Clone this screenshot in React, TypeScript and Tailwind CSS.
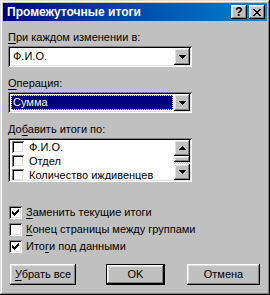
import React from 'react'

const raised = 'shadow-[inset_-1px_-1px_#000,inset_1px_1px_#fff,inset_-2px_-2px_#808080,inset_2px_2px_#dfdfdf]'
const sunken = 'shadow-[inset_1px_1px_#808080,inset_-1px_-1px_#fff,inset_2px_2px_#000,inset_-2px_-2px_#dfdfdf]'

const U: React.FC<{ children: React.ReactNode }> = ({ children }) => <span className="underline underline-offset-[2px]">{children}</span>

const Tri: React.FC<{ up?: boolean }> = ({ up }) => (
  <svg width="7" height="4" viewBox="0 0 7 4" shapeRendering="crispEdges" className={up ? 'rotate-180' : ''}>
    <rect x="0" y="0" width="7" height="1" fill="#000" />
    <rect x="1" y="1" width="5" height="1" fill="#000" />
    <rect x="2" y="2" width="3" height="1" fill="#000" />
    <rect x="3" y="3" width="1" height="1" fill="#000" />
  </svg>
)

const Tick = () => (
  <svg width="7" height="7" viewBox="0 0 7 7" shapeRendering="crispEdges">
    <rect x="6" y="0" width="1" height="1" />
    <rect x="5" y="1" width="2" height="1" />
    <rect x="0" y="2" width="1" height="1" />
    <rect x="4" y="2" width="3" height="1" />
    <rect x="0" y="3" width="2" height="1" />
    <rect x="3" y="3" width="3" height="1" />
    <rect x="0" y="4" width="5" height="1" />
    <rect x="1" y="5" width="3" height="1" />
    <rect x="2" y="6" width="1" height="1" />
  </svg>
)

const Box: React.FC<{ checked?: boolean; small?: boolean }> = ({ checked, small }) => (
  <span className={`${small ? 'w-[12px] h-[12px]' : 'w-[13px] h-[13px]'} bg-white ${sunken} flex items-center justify-center shrink-0`}>
    {checked && <Tick />}
  </span>
)

const DropBtn = () => (
  <div className={`w-[16px] h-full bg-[#c0c0c0] ${raised} flex items-center justify-center`}>
    <Tri />
  </div>
)

const Combo: React.FC<{ value: string; selected?: boolean }> = ({ value, selected }) => (
  <div className={`h-[21px] w-[184px] bg-white ${sunken} p-[2px] flex`}>
    <div className="flex-1 flex p-[1px]">
      {selected ? (
        <div className="flex-1 bg-[#000080] border border-dotted border-[#ffff00] text-white flex items-center pl-[1px]">{value}</div>
      ) : (
        <div className="flex-1 flex items-center pl-[2px]">{value}</div>
      )}
    </div>
    <DropBtn />
  </div>
)

const Btn: React.FC<{ children: React.ReactNode; w: string; def?: boolean }> = ({ children, w, def }) => (
  <div className={`${w} h-[21px] ${def ? 'border border-black' : ''}`}>
    <div className={`w-full h-full bg-[#c0c0c0] ${raised} flex items-center justify-center`}>{children}</div>
  </div>
)

export default function App() {
  const fields = ['Ф.И.О.', 'Отдел', 'Количество иждивенцев']
  return (
    <div className={`w-[270px] h-[295px] bg-[#c0c0c0] p-[3px] flex flex-col text-[11px] leading-[13px] text-black font-['Liberation_Sans',Arial,sans-serif] shadow-[inset_-1px_-1px_#000,inset_1px_1px_#dfdfdf,inset_-2px_-2px_#808080,inset_2px_2px_#fff]`}>
      <div className="h-[18px] flex items-center pl-[4px] pr-[2px] bg-gradient-to-r from-[#000080] to-[#1084d0]">
        <span className="flex-1 text-white font-bold text-[12px]">Промежуточные итоги</span>
        <div className={`w-[16px] h-[14px] bg-[#c0c0c0] ${raised} flex items-center justify-center font-bold text-[12px] leading-none`}>?</div>
        <div className={`w-[16px] h-[14px] ml-[2px] bg-[#c0c0c0] ${raised} flex items-center justify-center`}>
          <svg width="8" height="7" viewBox="0 0 8 7" shapeRendering="crispEdges">
            <path d="M0 0h2v1h1v1h2V1h1V0h2v1H7v1H6v1H5v1h1v1h1v1h1v1H6V6H5V5H3v1H2v1H0V6h1V5h1V4h1V3H2V2H1V1H0z" fill="#000" />
          </svg>
        </div>
      </div>

      <div className="flex flex-col px-[5px]">
        <div className="mt-[10px]"><U>П</U>ри каждом изменении в:</div>
        <div className="mt-[2px]"><Combo value="Ф.И.О." /></div>

        <div className="mt-[10px]"><U>О</U>перация:</div>
        <div className="mt-[2px]"><Combo value="Сумма" selected /></div>

        <div className="mt-[10px]">До<U>б</U>авить итоги по:</div>
        <div className={`mt-[2px] h-[44px] w-[184px] bg-white ${sunken} p-[2px] flex`}>
          <div className="flex-1 flex flex-col overflow-hidden">
            {fields.map((f) => (
              <div key={f} className="h-[14px] shrink-0 flex items-center pl-[2px] gap-[5px]">
                <Box small />
                <span>{f}</span>
              </div>
            ))}
          </div>
          <div className="w-[16px] flex flex-col">
            <div className={`h-[16px] bg-[#c0c0c0] ${raised} flex items-center justify-center`}><Tri up /></div>
            <div className="flex-1 flex flex-col bg-[image:repeating-conic-gradient(#c0c0c0_0%_25%,#fff_0%_50%)] bg-[length:2px_2px]">
              <div className={`h-[6px] bg-[#c0c0c0] ${raised}`} />
            </div>
            <div className={`h-[16px] bg-[#c0c0c0] ${raised} flex items-center justify-center`}><Tri /></div>
          </div>
        </div>

        <div className="mt-[22px] flex flex-col">
          <div className="h-[17px] flex items-center gap-[4px] pl-[1px]"><Box checked /><span><U>З</U>аменить текущие итоги</span></div>
          <div className="h-[17px] flex items-center gap-[4px] pl-[1px]"><Box /><span><U>К</U>онец страницы между группами</span></div>
          <div className="h-[17px] flex items-center gap-[4px] pl-[1px]"><Box checked /><span>Ито<U>г</U>и под данными</span></div>
        </div>

        <div className="mt-[9px] flex pl-[2px]">
          <Btn w="w-[66px]"><span><U>У</U>брать все</span></Btn>
          <div className="ml-[30px]"><Btn w="w-[59px]" def>OK</Btn></div>
          <div className="ml-[22px]"><Btn w="w-[73px]">Отмена</Btn></div>
        </div>
      </div>
    </div>
  )
}
